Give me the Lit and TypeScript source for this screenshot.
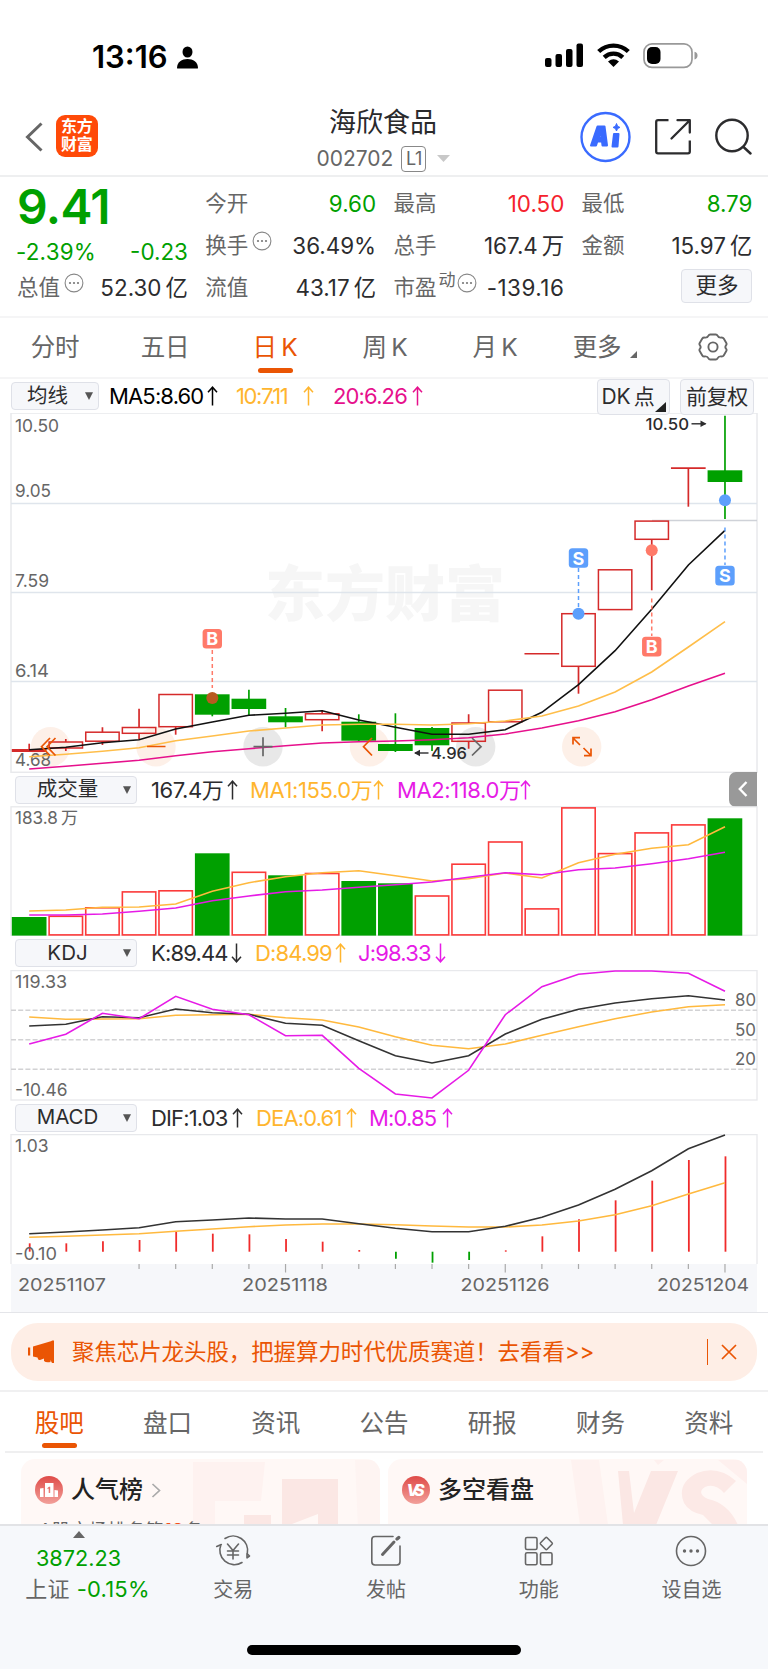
import { LitElement, html, svg, css } from "lit";
import { customElement } from "lit/decorators.js";

const RED = "#d52a2a";
const GREEN = "#00a000";
const X0 = 29.2;
const STEP = 36.62;
const cx = (i: number) => X0 + STEP * i;

/* body top, body bottom, wick top, wick bottom, colour */
type Candle = [number, number, number, number, "r" | "g"];
const candles: Candle[] = [
  [749.8, 751.2, 743.7, 750, "r"],
  [742, 748, 739, 751, "r"],
  [732.2, 741.2, 727.3, 745, "r"],
  [727.5, 733.3, 708.7, 739.3, "r"],
  [694.5, 726.7, 694.5, 734.7, "r"],
  [694.3, 714.7, 694.3, 716.3, "g"],
  [698.7, 709, 689.7, 715, "g"],
  [716.3, 722.3, 708, 727.3, "g"],
  [713.8, 719.7, 710, 731.3, "r"],
  [721.7, 740.7, 714.3, 741.7, "g"],
  [744, 751, 713.3, 752, "g"],
  [728, 745.3, 727, 751, "g"],
  [723, 741.3, 714.3, 748.7, "r"],
  [690.2, 721.8, 690.2, 721.8, "r"],
  [653.5, 654, 653.5, 654, "r"],
  [613.7, 666.3, 613.7, 693.7, "r"],
  [569.8, 609.6, 569.8, 609.6, "r"],
  [521.1, 539.3, 521.1, 590.3, "r"],
  [468, 468.3, 468, 506.7, "r"],
  [470.3, 482, 415.7, 519, "g"],
];
const ma5 = [749.7, 747.3, 742.7, 739.7, 729, 722, 715.3, 713.3, 710.7, 720, 727.3, 734.3, 734.3, 729.7, 712.3, 684.7, 650.7, 609.3, 565, 530.3];
const ma10 = [756.7, 754.3, 751.3, 747.7, 740.7, 736, 731, 728, 725, 724.3, 724.3, 725, 723.7, 721, 716, 706, 692, 672, 647, 621.7];
const ma20 = [769, 766.3, 763.3, 760.3, 755.7, 751.7, 748.7, 745.7, 743, 741.7, 741, 739.7, 737.7, 734, 728, 720.7, 711.7, 699.7, 686, 673.3];
const volTop = [917, 916.3, 907.8, 891.9, 890.8, 853.3, 872.3, 875.3, 873.5, 881, 883.3, 896, 864.2, 842, 908.9, 807.9, 853.6, 832.9, 824.9, 818.3];
const volGreen = new Set([0, 5, 7, 9, 10, 19]);
const from = (base: number, a: number[]) => a.map((v) => base + v / 3);
const vma1 = from(770, [423, 420, 412, 411, 402, 364, 338, 320, 308, 302, 317, 333, 326, 309, 324, 278, 253, 235, 224, 170]);
const vma2 = from(770, [435, 435, 432, 424, 414, 392, 378, 365, 360, 352, 344, 336, 322, 308, 314, 299, 294, 281, 266, 247]);
const kLine = from(770, [768, 763, 740, 743, 717, 728, 733, 760, 766, 812, 857, 879, 857, 792, 748, 718, 699, 686, 677, 690]);
const dLine = from(770, [741, 748, 747, 746, 736, 734, 733, 743, 750, 771, 800, 826, 836, 822, 796, 770, 746, 726, 710, 704]);
const jLine = from(770, [822, 793, 730, 746, 679, 718, 734, 797, 796, 895, 972, 984, 901, 734, 650, 613, 603, 603, 610, 664]);
const dif = from(1100, [401, 396, 390, 383, 365, 360, 354, 357, 357, 371, 385, 395, 395, 379, 352, 315, 268, 212, 146, 105]);
const dea = from(1100, [412, 409, 405, 401, 394, 387, 380, 375, 372, 372, 374, 378, 381, 381, 375, 363, 344, 317, 282, 248]);
const macd = from(1100, [430, 430, 424, 420, 396, 401, 403, 417, 425, 450, 476, 488, 480, 451, 409, 358, 301, 242, 180, 169]);

const line = (ys: number[], color: string, w = 1.6) =>
  svg`<polyline fill="none" stroke=${color} stroke-width=${w} points=${ys.map((y, i) => `${cx(i).toFixed(1)},${y.toFixed(1)}`).join(" ")} />`;
const label = (x: number, y: number, w: number, t: string, cls = "axis") =>
  svg`<text class=${cls} x=${x} y=${y} textLength=${w} lengthAdjust="spacingAndGlyphs">${t}</text>`;

const arrow = (up = true) => html`<svg class="arrow" width="11" height="20" viewBox="0 0 11 20" fill="none" stroke="currentColor" stroke-width="1.5">
  ${up ? svg`<path d="M5.5 19.5V1M1 6.2L5.5 1.2L10 6.2" />` : svg`<path d="M5.5 .5V19M1 13.8L5.5 18.8L10 13.8" />`}</svg>`;
const caret = html`<svg class="caret" width="8" height="8" viewBox="0 0 8 8"><path d="M0 .3H8L4 8Z" fill="#555" /></svg>`;
const more = html`<svg class="dots" width="20" height="20" viewBox="0 0 20 20"><circle cx="10" cy="10" r="8.9" fill="none" stroke="#888" stroke-width="1.1" /><g fill="#777"><circle cx="6" cy="10" r="1.1" /><circle cx="10" cy="10" r="1.1" /><circle cx="14" cy="10" r="1.1" /></g></svg>`;

@customElement("app-root")
export class AppRoot extends LitElement {
  static styles = css`
    :host { display: block; width: 768px; height: 1669px; overflow: hidden; background: #fff; color: #2c2c2e;
      font-family: Inter, "Noto Sans CJK SC", sans-serif; font-size: 22px; line-height: 1; }
    * { box-sizing: border-box; }
    svg { display: block; flex: none; }
    .status { height: 107px; padding: 40px 70px 0 92px; display: flex; align-items: flex-start; color: #000; }
    .time { font-size: 31px; font-weight: 600; line-height: 33px; width: 85px; }
    .person { margin-top: 6px; }
    .sys { margin-left: auto; display: flex; gap: 13px; padding-top: 3px; }
    .header { height: 70px; border-bottom: 2px solid #eeeff0; display: grid; grid-template-columns: 329px 108px 1fr; }
    .left { display: flex; align-items: flex-start; padding: 8px 0 0 25px; gap: 13px; }
    .left .chev { margin-top: 7px; }
    .logo { width: 42px; height: 42px; border-radius: 9px; background: #ff4a08; color: #fff; font-weight: 700; font-size: 16px; line-height: 17.5px; padding: 3px 0 0 5px; letter-spacing: -.3px; }
    .title { display: flex; flex-direction: column; align-items: center; white-space: nowrap; }
    .name { font-size: 27px; line-height: 32px; color: #2a2a2c; }
    .code { display: flex; align-items: center; color: #666; margin: 6px 0 0 1px; height: 27px; font-size: 21px; gap: 8px; letter-spacing: 0; width: 134px; }
    .code span { flex: none; }
    .code svg { margin-left: 3px; }
    .l1 { border: 1.5px solid #888; border-radius: 4px; width: 25px; height: 26px; font-size: 18px; line-height: 24px; text-align: center; letter-spacing: -.5px; }
    .acts { display: flex; justify-content: flex-end; gap: 24px; padding: 4px 16px 0 0; }
    .quote { height: 141px; border-bottom: 2px solid #f5f5f6; padding: 6px 15.5px 0 17px; display: flex; gap: 17.3px; }
    .qc { width: 170.9px; display: flex; flex-direction: column; }
    .row { height: 42px; display: flex; align-items: center; color: #666; font-size: 21.5px; white-space: nowrap; }
    .row b { font-weight: 400; margin-left: auto; color: #2c2c2e; font-size: 22.4px; letter-spacing: 0; }
    .row b.neg { letter-spacing: .5px; }
    .row .dots { margin: -10px 0 0 4px; }
    .row sup { font-size: 17px; line-height: 17px; margin: -16px -2px 0 2px; }
    .row .dots.tight { margin-left: 0; }
    .g, .row b.g { color: #00a000; }
    .row b.r { color: #f5222d; }
    .price { font-size: 48px; font-weight: 600; color: #00a000; line-height: 48px; letter-spacing: -.6px; height: 42px; }
    .qc .chg { padding-top: 13px; }
    .qc .chg b { color: #00a000; }
    .qc .chg b:first-child { margin-left: -1px; letter-spacing: .2px; }
    .btn { border: 1.5px solid #dfe1e8; border-radius: 4px; background: #f6f7fa; color: #2c2c2e; }
    .morebtn { width: 71px; height: 34px; margin-left: auto; text-align: center; font-size: 21.5px; line-height: 31px; margin-top: -4px; }
    .ktabs { height: 61px; border-bottom: 2px solid #f5f5f6; display: flex; color: #666; font-size: 24.5px; }
    .kt { width: 110px; position: relative; text-align: center; line-height: 58px; white-space: nowrap; letter-spacing: -.2px; }
    .on { color: #ea5504; }
    .kt.on::after, .bt.on::after { content: ""; position: absolute; left: 50%; margin-left: -17.5px; bottom: 4px; width: 35px; height: 5.5px; border-radius: 2.5px; background: #ea5504; }
    .tri { display: inline-block; margin: 0 0 -2px 9px; }
    .gear { margin: 15px 0 0 38px; }
    .bar { display: flex; align-items: center; white-space: nowrap; font-size: 22px; color: #2c2c2e; }
    .bar .btn { display: flex; align-items: center; justify-content: center; height: 28px; font-size: 20.5px; flex: none; position: relative; }
    .bar .val { display: flex; align-items: center; flex: none; letter-spacing: -.85px; }
    .bar .cjk { letter-spacing: -.4px; }
    .arrow { margin-left: auto; }
    .caret { margin-left: auto; }
    .mabar { height: 34px; padding: 0 14px 0 11px; }
    .mabar .sel { width: 88px; padding: 0 5px 0 15px; justify-content: flex-start; }
    .mabar .tall { height: 36px; font-size: 21px; margin-bottom: -1px; letter-spacing: -.3px; }
    .bar .org.ten { letter-spacing: -1.4px; }
    .bar .dk { width: 73px; margin-left: auto; padding-right: 11px; }
    .bar .fq { width: 74px; margin-left: 10px; }
    .corner { position: absolute; right: 3px; bottom: 2px; }
    .sub { height: 34px; padding-left: 15px; }
    .sub.slim { height: 33px; }
    .sub .sel { width: 122px; padding: 0 5px 0 0; margin-right: 14px; }
    .sub .sel span { width: 102px; text-align: center; margin-right: 4px; }
    .sub .sel .caret { margin-left: 0; }
    .bar .blk { color: #000; } .org { color: #ffb52e; } .pnk { color: #e6108c; } .mag { color: #e61be6; }
    .fold { width: 28px; height: 35px; margin: -1px 11px 0 auto; background: #999; border-radius: 7px 0 0 7px; display: flex; align-items: center; justify-content: center; }
    .chart { margin-left: 10px; }
    .axis { font-size: 17.5px; fill: #666; }
    .tag { font-size: 16.5px; font-weight: 500; fill: #2c2c2e; }
    .mk { font-size: 18px; font-weight: 700; fill: #fff; text-anchor: middle; }
    .wm { font-size: 60px; font-weight: 900; fill: #f6f6f6; }
    .ban { border-top: 1.5px solid #e4e5e9; border-bottom: 2px solid #f0f0f1; height: 80px; padding: 10px 11px 0; }
    .pill { height: 58px; border-radius: 27px; background: #feeee6; color: #ea5504; display: flex; align-items: center; padding: 0 20px 0 17px; font-size: 22.5px; white-space: nowrap; }
    .pill .msg { margin-left: 17px; letter-spacing: -.1px; }
    .pill .vr { width: 1.5px; height: 26px; background: #ea5504; margin: 0 13px 0 auto; }
    .btabs { height: 61px; display: flex; margin: 0 5px; border-bottom: 2px solid #efeff0; color: #666; font-size: 24.5px; }
    .bt { width: 108.3px; text-align: center; line-height: 62px; position: relative; }
    .bt.on::after { bottom: 3px; }
    .cards { height: 71px; overflow: hidden; padding: 6px 21px 0; display: flex; gap: 8px; }
    .card { width: 359px; height: 140px; border-radius: 14px; background: #fff8f6; overflow: hidden; display: grid; }
    .card > * { grid-area: 1 / 1; }
    .ct { display: flex; align-items: center; height: 62px; padding-left: 14px; font-size: 24px; font-weight: 500; color: #222; gap: 8px; }
    .rank { font-size: 18.6px; color: #666; margin: 58.5px 0 0 18px; white-space: nowrap; line-height: 24px; }
    .rank b { color: #f4511e; font-weight: 700; }
    .foot { height: 145px; background: #f6f8fb; border-top: 2px solid #e2e3e6; display: flex; position: relative; color: #666; font-size: 20px; }
    .idx { width: 157px; padding-top: 5px; display: flex; flex-direction: column; align-items: center; }
    .idx .n { font-size: 21.7px; color: #00a000; line-height: 22px; margin-top: 9px; }
    .idx .p { font-size: 22px; line-height: 24px; margin-top: 8px; display: flex; gap: 7px; letter-spacing: .2px; margin-left: 18px; white-space: nowrap; }
    .fi { width: 152.7px; display: flex; flex-direction: column; align-items: center; padding-top: 6.5px; gap: 9px; line-height: 24px; }
    .home { position: absolute; left: 247px; top: 119px; width: 274px; height: 10px; border-radius: 5px; background: #000; }
  `;

  private statusBar() {
    return html`<div class="status">
      <span class="time">13:16</span>
      <svg class="person" width="21" height="23" viewBox="0 0 21 23"><ellipse cx="10.5" cy="6" rx="5" ry="5.6" /><path d="M0 22C0 16 5 13 10.5 13S21 16 21 22Q21 22.5 20 22.5H1Q0 22.5 0 22Z" /></svg>
      <div class="sys">
        <svg width="39" height="25" viewBox="0 0 39 25"><rect x="0" y="15" width="6.5" height="9" rx="2" /><rect x="10.5" y="11" width="6.5" height="13" rx="2" /><rect x="21" y="6" width="6.5" height="18" rx="2" /><rect x="31.5" y=".5" width="6.5" height="23.5" rx="2" /></svg>
        <svg width="33" height="25" viewBox="0 0 33 25" fill="none" stroke="#000" stroke-width="4.4"><path d="M1.7 8.5C10 .6 23 .6 31.3 8.5" /><path d="M7.2 14.3C12.5 9.4 20.5 9.4 25.8 14.3" /><path d="M16.5 24L11 18.6Q16.5 14 22 18.6Z" fill="#000" stroke="none" /></svg>
        <svg width="55" height="26" viewBox="0 0 55 26"><rect x="1" y=".9" width="48" height="23.5" rx="8" fill="none" stroke="#999" stroke-width="1.7" /><rect x="4" y="4" width="13.5" height="17" rx="5" /><path d="M51.5 8.8Q54.5 9.5 54.5 12.5T51.5 16.5Z" fill="#999" /></svg>
      </div>
    </div>`;
  }

  private header() {
    return html`<div class="header">
      <div class="left">
        <svg class="chev" width="18" height="30" viewBox="0 0 18 30" fill="none" stroke="#666" stroke-width="3"><path d="M16.5 1.5L2.5 15L16.5 28.5" /></svg>
        <div class="logo">东方<br />财富</div>
      </div>
      <div class="title">
        <div class="name">海欣食品</div>
        <div class="code"><span>002702</span><span class="l1">L1</span><svg width="13" height="7" viewBox="0 0 13 7"><path d="M0 0H13L6.5 7Z" fill="#c8c8c8" /></svg></div>
      </div>
      <div class="acts">
        <svg width="51" height="52" viewBox="0 0 51 52"><circle cx="25.5" cy="26" r="24" fill="#fff" stroke="#3a6bff" stroke-width="2.4" />
          <g fill="#3a6bff" stroke="#3a6bff" stroke-width="2" stroke-linejoin="round"><path fill-rule="evenodd" d="M11 34.5L17.5 15.5H24.5L27 34.5H22.5L22 30.5H17.3L16 34.5ZM18.5 26.5H21.6L21 20.5Z" /><path d="M34 23H38.5L37.5 35.5H32.5Z" /><path d="M36.5 12.5L37.6 15.3L40 16.4L37.6 17.5L36.5 20L35.4 17.5L33 16.4L35.4 15.3Z" stroke-width="1" /></g></svg>
        <svg width="36" height="52" viewBox="0 0 36 52" fill="none" stroke="#2c2c2e" stroke-width="2.3" stroke-linejoin="round"><path d="M13.5 9.2H3Q1.2 9.2 1.2 11V40.5Q1.2 42.3 3 42.3H33Q34.8 42.3 34.8 40.5V29.5" /><path d="M22.5 9.2H34.8V21.5M34.3 9.7L16.5 27.5" stroke-linecap="round" /></svg>
        <svg width="37" height="52" viewBox="0 0 37 52" fill="none" stroke="#2c2c2e" stroke-width="2.4" stroke-linecap="round"><circle cx="17" cy="24.5" r="15.7" /><path d="M28.5 36L35.5 42.5" /></svg>
      </div>
    </div>`;
  }

  private quote() {
    return html`<div class="quote">
      <div class="qc">
        <div class="price">9.41</div>
        <div class="row chg"><b>-2.39%</b><b>-0.23</b></div>
        <div class="row">总值${more}<b>52.30\u2009亿</b></div>
      </div>
      <div class="qc">
        <div class="row">今开<b class="g">9.60</b></div>
        <div class="row">换手${more}<b>36.49%</b></div>
        <div class="row">流值<b>43.17\u2009亿</b></div>
      </div>
      <div class="qc">
        <div class="row">最高<b class="r">10.50</b></div>
        <div class="row">总手<b>167.4\u2009万</b></div>
        <div class="row">市盈<sup>动</sup>${more}<b class="neg">-139.16</b></div>
      </div>
      <div class="qc">
        <div class="row">最低<b class="g">8.79</b></div>
        <div class="row">金额<b>15.97\u2009亿</b></div>
        <div class="row"><div class="btn morebtn">更多</div></div>
      </div>
    </div>`;
  }

  private periodTabs() {
    return html`<div class="ktabs">
      ${["分时", "五日", "日\u2009K", "周\u2009K", "月\u2009K"].map((t, i) => html`<div class="kt ${i === 2 ? "on" : ""}">${t}</div>`)}
      <div class="kt">更多<svg class="tri" width="7" height="7" viewBox="0 0 7 7"><path d="M7 0V7H0Z" fill="#666" /></svg></div>
      <svg class="gear" width="30" height="28" viewBox="0 0 30 28" fill="none" stroke="#666" stroke-width="1.9" stroke-linejoin="round"><path d="M10.5 2.6Q11 1.5 12.2 1.5H17.8Q19 1.5 19.5 2.6Q20.5 4.8 23 4.6Q25 4.4 25.7 5.6L28.3 10Q29 11.2 28 12.3Q26.7 14 28 15.7Q29 16.8 28.3 18L25.7 22.4Q25 23.6 23 23.4Q20.5 23.2 19.5 25.4Q19 26.5 17.8 26.5H12.2Q11 26.5 10.5 25.4Q9.5 23.2 7 23.4Q5 23.6 4.3 22.4L1.7 18Q1 16.8 2 15.7Q3.3 14 2 12.3Q1 11.2 1.7 10L4.3 5.6Q5 4.4 7 4.6Q9.5 4.8 10.5 2.6Z" /><circle cx="15" cy="14" r="4.6" /></svg>
    </div>`;
  }

  private candle([t, b, wt, wb, c]: Candle, i: number) {
    const x = cx(i);
    const left = x - 17.4;
    if (c === "g") {
      return svg`<rect x=${left} y=${t} width="34.7" height=${b - t} fill=${GREEN} /><path d="M${x} ${wt}V${wb}" stroke=${GREEN} stroke-width="1.7" />`;
    }
    const flat = b - t < 2;
    return svg`${flat
      ? svg`<path d="M${left} ${(t + b) / 2}h34.7" stroke=${RED} stroke-width=${i ? 1.6 : 2.8} />`
      : svg`<rect x=${left + 0.7} y=${t} width="33.4" height=${b - t} fill="none" stroke=${RED} stroke-width="1.5" />`}
      <path d="M${x} ${wt}V${t}M${x} ${b}V${Math.max(wb, b)}" stroke=${RED} stroke-width="1.7" />`;
  }

  private marker(i: number, boxY: number, d1: number, d2: number, dot: number, buy: boolean) {
    const x = cx(i);
    const c = buy ? "#ff7a69" : "#5d9ffc";
    return svg`<path d="M${x} ${d1}V${d2}" stroke=${c} stroke-width="1.5" stroke-dasharray="4 3" />
      <circle cx=${x} cy=${dot} r="6" fill=${i === 5 ? "#b85a20" : c} />
      <rect x=${x - 9.7} y=${boxY} width="19.4" height="19.6" rx="3.5" fill=${c} />
      <text class="mk" x=${x} y=${boxY + 16.3}>${buy ? "B" : "S"}</text>`;
  }

  private mainChart() {
    return html`<svg class="chart" width="748" height="360" viewBox="10 413 748 360">
      <rect x="11" y="413" width="746" height="359.3" fill="#fff" stroke="#e8e9ec" stroke-width="1.5" />
      ${label(265, 616, 240, "东方财富", "wm")}
      <path d="M11 503.5H757M11 592.5H757M11 681.5H757" stroke="#dfe5ec" stroke-width="1.3" />
      <path d="M652 520.5H757" stroke="#cfd2d8" stroke-width="1.3" />
      <g fill="#ea5504" fill-opacity=".09"><circle cx="50.5" cy="746.7" r="19.7" /><circle cx="156" cy="746.7" r="19.7" /><circle cx="369.5" cy="746.7" r="19.7" /><circle cx="581.7" cy="746.7" r="19.7" /></g>
      <g fill="#000" fill-opacity=".09"><circle cx="263" cy="746.7" r="19.7" /><circle cx="475.7" cy="746.7" r="19.7" /></g>
      ${candles.map((c, i) => this.candle(c, i))}
      ${label(15, 432.3, 44, "10.50")}${label(15, 497, 36, "9.05")}${label(15, 586.7, 34, "7.59")}${label(15, 676.7, 34, "6.14")}${label(15, 766, 36, "4.68")}
      ${line(ma5, "#111")}${line(ma10, "#ffbe4a")}${line(ma20, "#e6108c")}
      <g fill="none" stroke="#ea5504" stroke-width="1.7"><path d="M50 738L41.5 746.7L50 755.5M55.5 738L47 746.7L55.5 755.5M147 746.5H165.5M372 738L363.5 746.7L372 755.5" /><path d="M580 745L573 738M573 744.5V737.7H580M583.5 748L591 755.5M584 755.6H591V748.5" /></g>
      <g fill="none" stroke="#666" stroke-width="1.7"><path d="M253.5 746.7H272.5M263 737.2V756.2M472 738L481 746.7L472 755.5" /></g>
      ${this.marker(5, 629, 650, 688, 698, true)}
      ${this.marker(15, 548.2, 568, 607, 613.7, false)}
      ${this.marker(17, 636.8, 598.5, 636, 550.2, true)}
      ${this.marker(19, 565.8, 527.5, 565, 500.3, false)}
      ${label(645.5, 430, 43.5, "10.50", "tag")}${label(431, 759, 36, "4.96", "tag")}
      <g fill="none" stroke="#2c2c2e" stroke-width="1.4"><path d="M691.5 423.8H705.5" /><path d="M428.5 753H415" /></g>
      <path d="M706.5 423.8L700.5 420.5V427.1ZM414 753L420 749.7V756.3Z" fill="#2c2c2e" />
    </svg>`;
  }

  private volumeChart() {
    return html`<svg class="chart" width="748" height="130" viewBox="10 806 748 130">
      <rect x="11" y="806.8" width="746" height="128.5" fill="none" stroke="#e8e9ec" stroke-width="1.3" />
      ${label(15, 824, 63, "183.8\u2009万")}
      ${volTop.map((y, i) => volGreen.has(i)
        ? svg`<rect x=${cx(i) - 17.4} y=${y} width="34.7" height=${935.6 - y} fill=${GREEN} />`
        : svg`<rect x=${cx(i) - 16.7} y=${y} width="33.4" height=${934.9 - y} fill="none" stroke="#fb3a3a" stroke-width="1.6" />`)}
      ${line(vma1, "#ffb93e")}${line(vma2, "#e61be6")}
    </svg>`;
  }

  private kdjChart() {
    return html`<svg class="chart" width="748" height="131" viewBox="10 970 748 131">
      <rect x="11" y="970.6" width="746" height="129.4" fill="none" stroke="#e8e9ec" stroke-width="1.3" />
      <path d="M11 1010.2H757M11 1039.7H757M11 1069.2H757" stroke="#d2d2d4" stroke-width="1.4" stroke-dasharray="5 2.2" />
      ${label(15, 988, 52, "119.33")}${label(15, 1096, 52.5, "-10.46")}
      ${label(735, 1006, 21, "80")}${label(735, 1035.5, 21, "50")}${label(735, 1064.7, 21, "20")}
      ${line(dLine, "#ffb93e")}${line(kLine, "#333")}${line(jLine, "#e61be6")}
    </svg>`;
  }

  private macdChart() {
    return html`<svg class="chart" width="748" height="178" viewBox="10 1134 748 178">
      <rect x="11" y="1264" width="746" height="48" fill="#f6f7fa" />
      <path d="M11 1264V1134.6H757V1264" fill="none" stroke="#e8e9ec" stroke-width="1.3" />
      ${macd.map((y, i) => svg`<path d="M${cx(i) + 0.5} ${y}V1251.7" stroke=${y > 1251.7 ? GREEN : "#f02b2b"} stroke-width="1.8" />`)}
      ${label(15, 1151.5, 33.5, "1.03")}${label(15, 1259.7, 42, "-0.10")}
      ${line(dea, "#ffb93e")}${line(dif, "#333")}
      ${Array.from({ length: 17 }, (_, k) => k + 3).map((i) => svg`<path d="M${cx(i)} 1264V${i === 7 || i === 13 || i === 19 ? 1272.5 : 1269}" stroke="#aaa" stroke-width="1.2" />`)}
      ${label(18, 1290.8, 88, "20251107")}${label(242, 1290.8, 86, "20251118")}${label(460.5, 1290.8, 89, "20251126")}${label(657, 1290.8, 92, "20251204")}
    </svg>`;
  }

  private subBar(name: string, vals: [string, string, boolean, number, number][], slim: boolean, fold = false) {
    return html`<div class="bar sub ${slim ? "slim" : ""}"><div class="btn sel"><span>${name}</span>${caret}</div>
      ${vals.map(([t, cls, up, w, gap]) => html`<div class="val ${cls}" style="width:${w}px;margin-right:${gap}px">${t}${arrow(up)}</div>`)}
      ${fold ? html`<div class="fold"><svg width="10" height="16" viewBox="0 0 10 16" fill="none" stroke="#fff" stroke-width="2.4"><path d="M8.5 1L1.8 8L8.5 15" /></svg></div>` : ""}
    </div>`;
  }

  private footer() {
    const s = (body: unknown) => html`<svg width="36" height="36" viewBox="0 0 36 36" fill="none" stroke="#666" stroke-width="1.6" stroke-linecap="round" stroke-linejoin="round">${body}</svg>`;
    return html`<div class="foot">
      <div class="idx"><svg width="12" height="7" viewBox="0 0 12 7"><path d="M6 0L12 7H0Z" fill="#666" /></svg><div class="n">3872.23</div><div class="p">上证<span class="g">-0.15%</span></div></div>
      <div class="fi">${s(svg`<path d="M10 5.5A14.5 14.5 0 0 1 32.3 20.5M1.7 13.5L6.3 11.5M6 11.5A14.5 14.5 0 0 0 27 29.5M32 24.8L34.5 23L32 20.5V24.5" /><path d="M12.5 11L18 17.5L23.5 11M18 17.5V26M12.5 18H23.5M12.5 22H23.5" />`)}交易</div>
      <div class="fi">${s(svg`<path d="M25 3.5H7Q3.8 3.5 3.8 6.7V28.8Q3.8 32 7 32H28.8Q32 32 32 28.8V13" /><path d="M14.5 21.5L26 9" stroke-width="3" /><path d="M29 6L30.8 4.5" stroke-width="3.4" />`)}发帖</div>
      <div class="fi">${s(svg`<rect x="4.5" y="4.5" width="11.5" height="12" rx="1.5" /><rect x="4.5" y="19.8" width="11.5" height="12" rx="1.5" /><rect x="19.5" y="19.8" width="11.5" height="12" rx="1.5" /><path d="M24.5 4.7Q25.3 3.9 26.1 4.7L31 9.7Q31.7 10.5 31 11.3L26.1 16.3Q25.3 17.1 24.5 16.3L19.6 11.3Q18.9 10.5 19.6 9.7Z" />`)}功能</div>
      <div class="fi">${s(svg`<circle cx="18" cy="18" r="14.5" /><g fill="#666" stroke="none"><circle cx="11.5" cy="18" r="1.7" /><circle cx="18" cy="18" r="1.7" /><circle cx="24.5" cy="18" r="1.7" /></g>`)}设自选</div>
      <div class="home"></div>
    </div>`;
  }

  render() {
    return html`
      ${this.statusBar()}${this.header()}${this.quote()}${this.periodTabs()}
      <div class="bar mabar">
        <div class="btn sel">均线${caret}</div>
        <div class="val blk" style="width:109px;margin-left:10px">MA5:8.60${arrow()}</div>
        <div class="val org ten" style="width:78px;margin-left:18px">10:7.11${arrow()}</div>
        <div class="val pnk" style="width:90px;margin-left:19px">20:6.26${arrow()}</div>
        <div class="btn tall dk">DK\u2009点<svg class="corner" width="11" height="10" viewBox="0 0 11 10"><path d="M11 0V10H0Z" fill="#222" /></svg></div>
        <div class="btn tall fq">前复权</div>
      </div>
      ${this.mainChart()}
      ${this.subBar("成交量", [["167.4万", "cjk", true, 87, 12], ["MA1:155.0万", "org cjk", true, 134, 13], ["MA2:118.0万", "mag cjk", true, 134, 0]], true, true)}
      ${this.volumeChart()}
      ${this.subBar("KDJ", [["K:89.44", "", false, 91, 13], ["D:84.99", "org", true, 91, 12], ["J:98.33", "mag", false, 88, 0]], false)}
      ${this.kdjChart()}
      ${this.subBar("MACD", [["DIF:1.03", "", true, 92, 13], ["DEA:0.61", "org", true, 101, 12], ["M:0.85", "mag", true, 84, 0]], true)}
      ${this.macdChart()}
      <div class="ban"><div class="pill">
        <svg width="27" height="24" viewBox="0 0 27 24" fill="#ea5504"><rect x="0" y="7.5" width="2.2" height="8" /><path d="M5 6.5L22 1.5Q24 1 24 .4H26V23H24L22.5 20V22Q18 23 16 21V18.5L12 20Q10 20.5 9.5 17.5L5 16.5Z" /></svg>
        <span class="msg">聚焦芯片龙头股，把握算力时代优质赛道！去看看&gt;&gt;</span><span class="vr"></span>
        <svg width="16" height="16" viewBox="0 0 16 16" stroke="#ea5504" stroke-width="1.7"><path d="M1 1L15 15M15 1L1 15" /></svg>
      </div></div>
      <div class="btabs">${["股吧", "盘口", "资讯", "公告", "研报", "财务", "资料"].map((t, i) => html`<div class="bt ${i ? "" : "on"}">${t}</div>`)}</div>
      <div class="cards">
        <div class="card">
          <svg width="359" height="140" viewBox="0 0 359 140"><path d="M172 3H244L240 42H194V140H172Z" fill="#fef2f0" /><path d="M261 20H317V65H297V55L271 65H261ZM223 56H250V140H223Z" fill="#fbe7e4" /><path d="M334 1H359V140H340Z" fill="#fef4f2" /></svg>
          <div class="ct"><svg width="28" height="28" viewBox="0 0 28 28"><circle cx="14" cy="14" r="14" fill="url(#ga)" /><defs><linearGradient id="ga" x2="0" y2="1"><stop stop-color="#df4b48" /><stop offset="1" stop-color="#f2a09a" /></linearGradient></defs><path fill="#fff" fill-rule="evenodd" d="M5 12.5L8.5 12V21H5ZM10 7H18.5V21H10ZM19.5 14L23 14.5V21H19.5ZM12.5 12L14 10.8H15.2V17H13.7V12.6L12.5 13.2Z" /></svg>人气榜<svg width="10" height="15" viewBox="0 0 10 15" fill="none" stroke="#aaa" stroke-width="1.7"><path d="M1.5 1L8.5 7.5L1.5 14" /></svg></div>
          <div class="rank">A股市场排名第<b>10</b>名</div>
        </div>
        <div class="card">
          <svg width="359" height="140" viewBox="0 0 359 140"><path d="M183 1H211L220 66H192Z" fill="#fef2f0" /><path d="M230 12H241L246 54L263 12H290L268 66H235Z" fill="#fbe7e4" /><path d="M348 22Q330 6 309 14Q288 25 296 44Q301 53 315 56L325 66H350Q340 44 320 40Q308 34 317 28Q327 24 336 34Z" fill="#fce9e6" /><path d="M266 1H276L270 6ZM330 1H359V25Z" fill="#fef0ee" /></svg>
          <div class="ct"><svg width="28" height="28" viewBox="0 0 28 28"><circle cx="14" cy="14" r="14" fill="url(#gb)" /><defs><linearGradient id="gb" x2="0" y2="1"><stop stop-color="#df4b48" /><stop offset="1" stop-color="#f2a09a" /></linearGradient></defs><text x="13.5" y="20" text-anchor="middle" font-size="16" font-weight="800" font-style="italic" fill="#fff" textLength="18">VS</text></svg>多空看盘</div>
        </div>
      </div>
      ${this.footer()}`;
  }
}
